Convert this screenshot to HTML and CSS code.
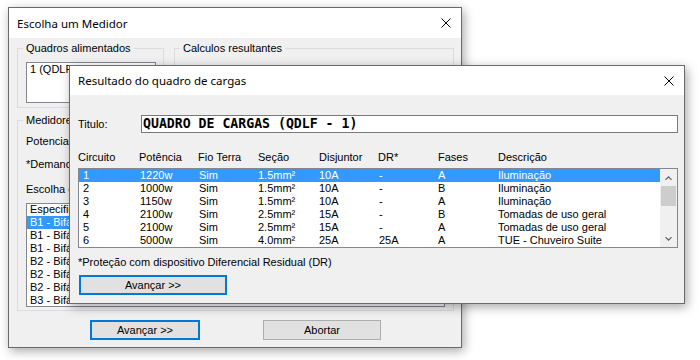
FILE: index.html
```html
<!DOCTYPE html>
<html lang="pt">
<head>
<meta charset="utf-8">
<title>Resultado do quadro de cargas</title>
<link rel="stylesheet" href="styles.css">
</head>
<body>
<div class="desk">
  <div class="win win-back">
    <div class="titlebar">
      <span class="title">Escolha um Medidor</span>
      <svg class="close" viewBox="0 0 10 10"><path d="M0.5 0.5L9.5 9.5M9.5 0.5L0.5 9.5" stroke="#000" stroke-width="1" fill="none"/></svg>
    </div>
    <div class="back-body">
      <div class="groups">
        <fieldset class="group g-quadros">
          <legend>Quadros alimentados</legend>
          <div class="listbox lb-quadros"><div class="lb-text">1 (QDLF - 1)</div></div>
        </fieldset>
        <fieldset class="group g-calc">
          <legend>Calculos resultantes</legend>
        </fieldset>
      </div>
      <fieldset class="group g-med">
        <legend>Medidores</legend>
        <div class="lbl">Potencia instalada: 13670w</div>
        <div class="lbl lbl-dem">*Demanda: 10540w</div>
        <div class="lbl lbl-esc">Escolha o medidor:</div>
        <div class="listbox lb-med">
          <div class="items">
            <div class="lb-item">Especificação</div>
            <div class="lb-item sel">B1 - Bifásico  2F+N  40A</div>
            <div class="lb-item">B1 - Bifásico  2F+N  50A</div>
            <div class="lb-item">B1 - Bifásico  2F+N  60A</div>
            <div class="lb-item">B2 - Bifásico  2F+N  70A</div>
            <div class="lb-item">B2 - Bifásico  2F+N  80A</div>
            <div class="lb-item">B2 - Bifásico  2F+N  90A</div>
            <div class="lb-item">B3 - Bifásico  2F+N  100A</div>
          </div>
        </div>
      </fieldset>
      <div class="btnrow">
        <button class="btn btn-next focus">Avançar &gt;&gt;</button>
        <button class="btn btn-abort">Abortar</button>
      </div>
    </div>
  </div>

  <div class="win win-front">
    <div class="titlebar tb-front">
      <span class="title">Resultado do quadro de cargas</span>
      <svg class="close" viewBox="0 0 10 10"><path d="M0.5 0.5L9.5 9.5M9.5 0.5L0.5 9.5" stroke="#000" stroke-width="1" fill="none"/></svg>
    </div>
    <div class="front-body">
      <div class="titulo-row">
        <span class="titulo-lbl">Titulo:</span>
        <div class="titulo-box">QUADRO DE CARGAS (QDLF - 1)</div>
      </div>
      <div class="thead">
        <span>Circuito</span><span>Potência</span><span>Fio Terra</span><span>Seção</span><span>Disjuntor</span><span>DR*</span><span>Fases</span><span>Descrição</span>
      </div>
      <div class="list">
        <div class="rows">
          <div class="row sel"><span>1</span><span>1220w</span><span>Sim</span><span>1.5mm²</span><span>10A</span><span>-</span><span>A</span><span>Iluminação</span></div>
          <div class="row"><span>2</span><span>1000w</span><span>Sim</span><span>1.5mm²</span><span>10A</span><span>-</span><span>B</span><span>Iluminação</span></div>
          <div class="row"><span>3</span><span>1150w</span><span>Sim</span><span>1.5mm²</span><span>10A</span><span>-</span><span>A</span><span>Iluminação</span></div>
          <div class="row"><span>4</span><span>2100w</span><span>Sim</span><span>2.5mm²</span><span>15A</span><span>-</span><span>B</span><span>Tomadas de uso geral</span></div>
          <div class="row"><span>5</span><span>2100w</span><span>Sim</span><span>2.5mm²</span><span>15A</span><span>-</span><span>A</span><span>Tomadas de uso geral</span></div>
          <div class="row"><span>6</span><span>5000w</span><span>Sim</span><span>4.0mm²</span><span>25A</span><span>25A</span><span>A</span><span>TUE - Chuveiro Suite</span></div>
        </div>
        <div class="scroll">
          <div class="sb-btn"><svg class="chev" viewBox="0 0 7 4"><polyline points="0.5,3.8 3.5,0.8 6.5,3.8" fill="none" stroke="#606060" stroke-width="1.2"/></svg></div>
          <div class="sb-thumb"></div>
          <div class="sb-track"></div>
          <div class="sb-btn"><svg class="chev" viewBox="0 0 7 4"><polyline points="0.5,0.2 3.5,3.2 6.5,0.2" fill="none" stroke="#606060" stroke-width="1.2"/></svg></div>
        </div>
      </div>
      <div class="note">*Proteção com dispositivo Diferencial Residual (DR)</div>
      <button class="btn btn-front focus">Avançar &gt;&gt;</button>
    </div>
  </div>
</div>
</body>
</html>
```

FILE: styles.css
```css
* { box-sizing: border-box; }
html, body { margin: 0; padding: 0; background: #fff; }
body {
  font-family: "Liberation Sans", Arial, sans-serif;
  font-size: 11px;
  color: #000;
}
.desk { position: relative; width: 700px; height: 360px; overflow: hidden; }

.win {
  position: absolute;
  display: flex;
  flex-direction: column;
  border: 1px solid #6a6a6a;
  background: #f0f0f0;
  box-shadow: 2px 3px 10px rgba(0, 0, 0, 0.35);
}
.win-back { left: 8px; top: 7px; width: 454px; height: 341px; }
.win-front { left: 69px; top: 65px; width: 616px; height: 239px; }

.titlebar {
  flex: none;
  height: 30px;
  background: #fff;
  display: flex;
  align-items: center;
  justify-content: space-between;
  padding: 0 10px 0 8px;
}
.tb-front { height: 29px; }
.title { font-family: "Noto Sans", sans-serif; font-size: 11.5px; }
.close { width: 10px; height: 10px; display: block; }

/* back window */
.back-body {
  flex: 1;
  display: flex;
  flex-direction: column;
  padding: 3px 7px 0 8px;
}
.groups { display: flex; gap: 10px; }
.group {
  margin: 0;
  min-width: 0;
  border: 1px solid #dcdcdc;
  padding: 7px 7px 4px 8px;
}
.group legend { padding: 0 3px; margin-left: -3px; line-height: 14px; }
.g-quadros { width: 147px; flex: none; }
.g-calc { flex: 1; }

.listbox { background: #fff; border: 1px solid #828790; overflow: hidden; }
.lb-quadros { height: 41px; }
.lb-text { line-height: 13px; padding-left: 3px; white-space: nowrap; }

.g-med { margin-top: 5px; padding: 8px 8px 3px 8px; }
.lbl { line-height: 13px; white-space: nowrap; }
.lbl-dem { margin-top: 10px; }
.lbl-esc { margin-top: 12px; }
.lb-med { margin-top: 7px; height: 104px; }
.lb-med .items { margin-top: -1px; }
.lb-item { line-height: 13px; padding-left: 3px; white-space: pre; }
.lb-item.sel { background: #3399ff; color: #fff; }

.btnrow { display: flex; justify-content: center; gap: 63px; margin-top: 9px; }
.btn {
  height: 20px;
  padding: 0;
  font: inherit;
  color: #000;
  background: #e1e1e1;
  border: 1px solid #adadad;
}
.btn.focus { border: 2px solid #0078d7; }
.btn-next { width: 110px; }
.btn-abort { width: 118px; }

/* front dialog */
.front-body {
  flex: 1;
  display: flex;
  flex-direction: column;
  align-items: stretch;
  padding: 20px 6px 7px 8px;
}
.titulo-row { display: flex; align-items: center; }
.titulo-lbl { width: 63px; flex: none; }
.titulo-box {
  flex: 1;
  height: 18px;
  background: #fff;
  border: 1px solid #7a7a7a;
  padding-left: 1px;
  font-family: "DejaVu Sans Mono", monospace;
  font-weight: bold;
  font-size: 13.2px;
  line-height: 16px;
  white-space: pre;
}
.thead {
  display: grid;
  grid-template-columns: 61px 59px 60px 61px 59px 60px 60px 1fr;
  margin-top: 18px;
  line-height: 13px;
}
.list {
  margin-top: 4px;
  height: 80px;
  background: #fff;
  border: 1px solid #828790;
  display: flex;
}
.rows { flex: 1; }
.row {
  display: grid;
  grid-template-columns: 61px 59px 59px 61px 60px 59px 60px 1fr;
  line-height: 13px;
  white-space: nowrap;
}
.row span:first-child { padding-left: 4px; }
.row.sel { background: #3399ff; color: #fff; }

.scroll { width: 17px; flex: none; background: #f0f0f0; display: flex; flex-direction: column; }
.sb-btn { height: 17px; flex: none; display: flex; align-items: center; justify-content: center; }
.chev { width: 7px; height: 4px; display: block; }
.sb-thumb { height: 20px; flex: none; margin: 0 1px; background: #cdcdcd; }
.sb-track { flex: 1; }

.note { margin-top: 8px; line-height: 13px; }
.btn-front { margin-top: 6px; margin-left: 1px; width: 148px; align-self: flex-start; }
```
